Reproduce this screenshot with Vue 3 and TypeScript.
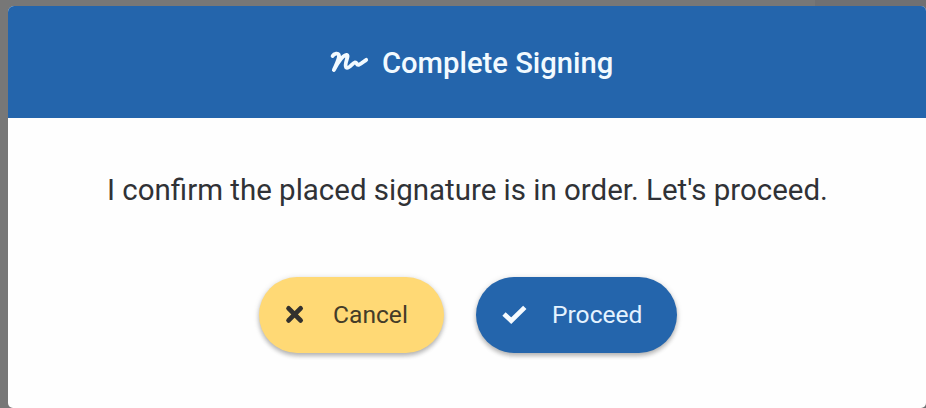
<script setup lang="ts">
const title: string = 'Complete Signing'
const message: string = "I confirm the placed signature is in order. Let's proceed."
</script>

<template>
  <div class="backdrop">
    <section class="dialog" role="dialog">
      <header class="head">
        <svg class="sign" width="40" height="24" viewBox="0 0 40 24" aria-hidden="true">
          <path d="M3.6 5C5 2.6 9.6 1.4 10 4.4C10.2 8.4 6.8 14 4.8 19C8.6 12 13.6 4.2 17.4 3.8C21.2 4 14.4 13 17.2 16.6C19.8 18.6 23.6 11.8 26 11.4C28.2 11.2 27.2 14.4 29.6 13.8C32.4 13 34.8 10.4 37.2 8.8" />
        </svg>
        <h1 class="title">{{ title }}</h1>
      </header>
      <p class="message">{{ message }}</p>
      <div class="actions">
        <button class="btn cancel" type="button">
          <svg class="cross" width="20" height="20" viewBox="0 0 20 20" aria-hidden="true">
            <path d="M3.6 3.4L15.6 15.4M15.6 3.4L3.6 15.4" />
          </svg>
          <span class="label">Cancel</span>
        </button>
        <button class="btn proceed" type="button">
          <svg class="check" width="26" height="20" viewBox="0 0 26 20" aria-hidden="true">
            <path d="M3 9L10.2 15.6L23.8 2.4" />
          </svg>
          <span class="label">Proceed</span>
        </button>
      </div>
    </section>
  </div>
</template>

<style>
body {
  overflow: hidden;
}
</style>

<style scoped>
.backdrop {
  box-sizing: border-box;
  width: 926px;
  height: 408px;
  padding: 6px 0 0 8px;
  background: linear-gradient(90deg, #777 815px, #707072 815px);
  font-family: Roboto, "Liberation Sans", sans-serif;
}
.dialog {
  height: 402px;
  overflow: hidden;
  border-radius: 6px 5px 5px 5px;
  background: #fefefe;
}
.head {
  box-sizing: border-box;
  height: 112px;
  padding: 2px 0 0 321px;
  display: flex;
  align-items: center;
  background: #2465ac;
}
.sign {
  flex: none;
  margin-right: 13px;
  fill: none;
  stroke: #f2faff;
  stroke-width: 3.8;
  stroke-linecap: round;
  stroke-linejoin: round;
}
.title {
  margin: 0;
  font-size: 29.2px;
  font-weight: 500;
  line-height: 36px;
  color: #f2faff;
  white-space: nowrap;
}
.message {
  margin: 54px 0 0 99px;
  font-size: 29.48px;
  line-height: 36px;
  color: #303236;
  white-space: nowrap;
}
.actions {
  display: flex;
  gap: 32px;
  margin: 69px 0 0 251px;
}
.btn {
  display: flex;
  align-items: center;
  box-sizing: border-box;
  height: 76px;
  padding: 0;
  border: 0;
  border-radius: 38px;
  font: 400 24.6px/30px Roboto, "Liberation Sans", sans-serif;
  box-shadow: 0 3px 4px rgba(0, 0, 0, 0.22), 0 1px 6px rgba(0, 0, 0, 0.14);
}
.cancel {
  width: 185px;
  padding-left: 26px;
  background: #ffd975;
  color: #443c28;
}
.proceed {
  width: 201px;
  padding-left: 25px;
  background: #2465ac;
  color: #e4f3ff;
}
.btn svg {
  flex: none;
  fill: none;
}
.cross {
  margin-right: 28px;
  stroke: #33312e;
  stroke-width: 4.8;
  stroke-linecap: round;
}
.check {
  margin-right: 25px;
  stroke: #f6fbff;
  stroke-width: 4.8;
}
</style>
